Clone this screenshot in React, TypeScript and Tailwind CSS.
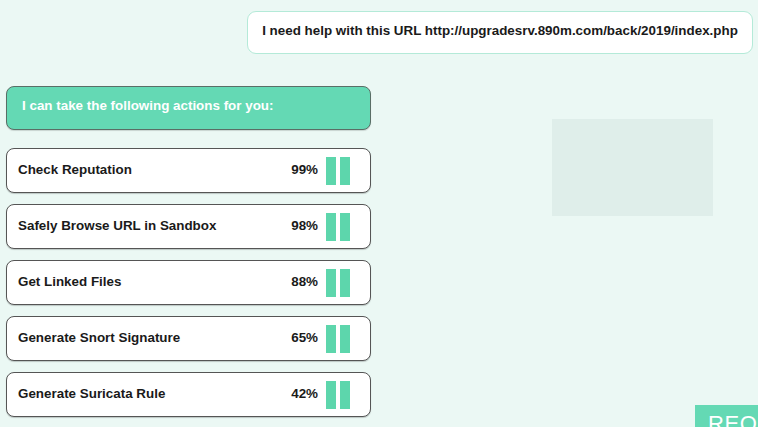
import React from "react";

const actions = [
  { label: "Check Reputation", pct: "99%" },
  { label: "Safely Browse URL in Sandbox", pct: "98%" },
  { label: "Get Linked Files", pct: "88%" },
  { label: "Generate Snort Signature", pct: "65%" },
  { label: "Generate Suricata Rule", pct: "42%" },
];

export default function App() {
  return (
    <div
      className="relative w-[758px] h-[427px] overflow-hidden bg-[#ebf8f4] text-[#1a1a1a]"
      style={{ fontFamily: '"Liberation Sans", Arial, sans-serif' }}
    >
      <div className="flex justify-end pt-[11px] pr-[5px]">
        <div className="w-[506px] h-[43px] rounded-[9px] border border-[#b4ead8] bg-white flex items-center justify-center pb-[2px] text-[13.4px] font-bold">
          I need help with this URL http://upgradesrv.890m.com/back/2019/index.php
        </div>
      </div>

      <div className="flex">
        <div className="ml-[6px] mt-[32px] w-[365px] flex flex-col">
          <div className="h-[44px] rounded-[8px] border border-[#5a6e66] bg-[#64d9b4] flex items-center pl-[15px] pb-[3px] text-white text-[13.4px] font-bold shadow-[0_1px_1px_rgba(0,0,0,0.15)]">
            I can take the following actions for you:
          </div>
          <div className="mt-[18px] flex flex-col gap-[11px]">
            {actions.map((a) => (
              <div
                key={a.label}
                className="h-[45px] rounded-[8px] border border-[#555] bg-white flex items-center pl-[11px] pr-[20px] text-[13.4px] font-bold shadow-[0_1px_1px_rgba(0,0,0,0.2)]"
              >
                <span className="flex-1">{a.label}</span>
                <span className="mr-[8px]">{a.pct}</span>
                <div className="flex gap-[4px]">
                  <div className="w-[10px] h-[28px] bg-[#5dd6ac]" />
                  <div className="w-[10px] h-[28px] bg-[#5dd6ac]" />
                </div>
              </div>
            ))}
          </div>
        </div>
        <div className="ml-[181px] mt-[65px] w-[161px] h-[97px] bg-[#dfeeea]" />
      </div>

      <div className="absolute left-[695px] top-[405px] w-[80px] h-[40px] bg-[#64d9b4] text-white text-[22px] pl-[13px] pt-[8px] leading-none font-light tracking-wide">
        REQ
      </div>
    </div>
  );
}
